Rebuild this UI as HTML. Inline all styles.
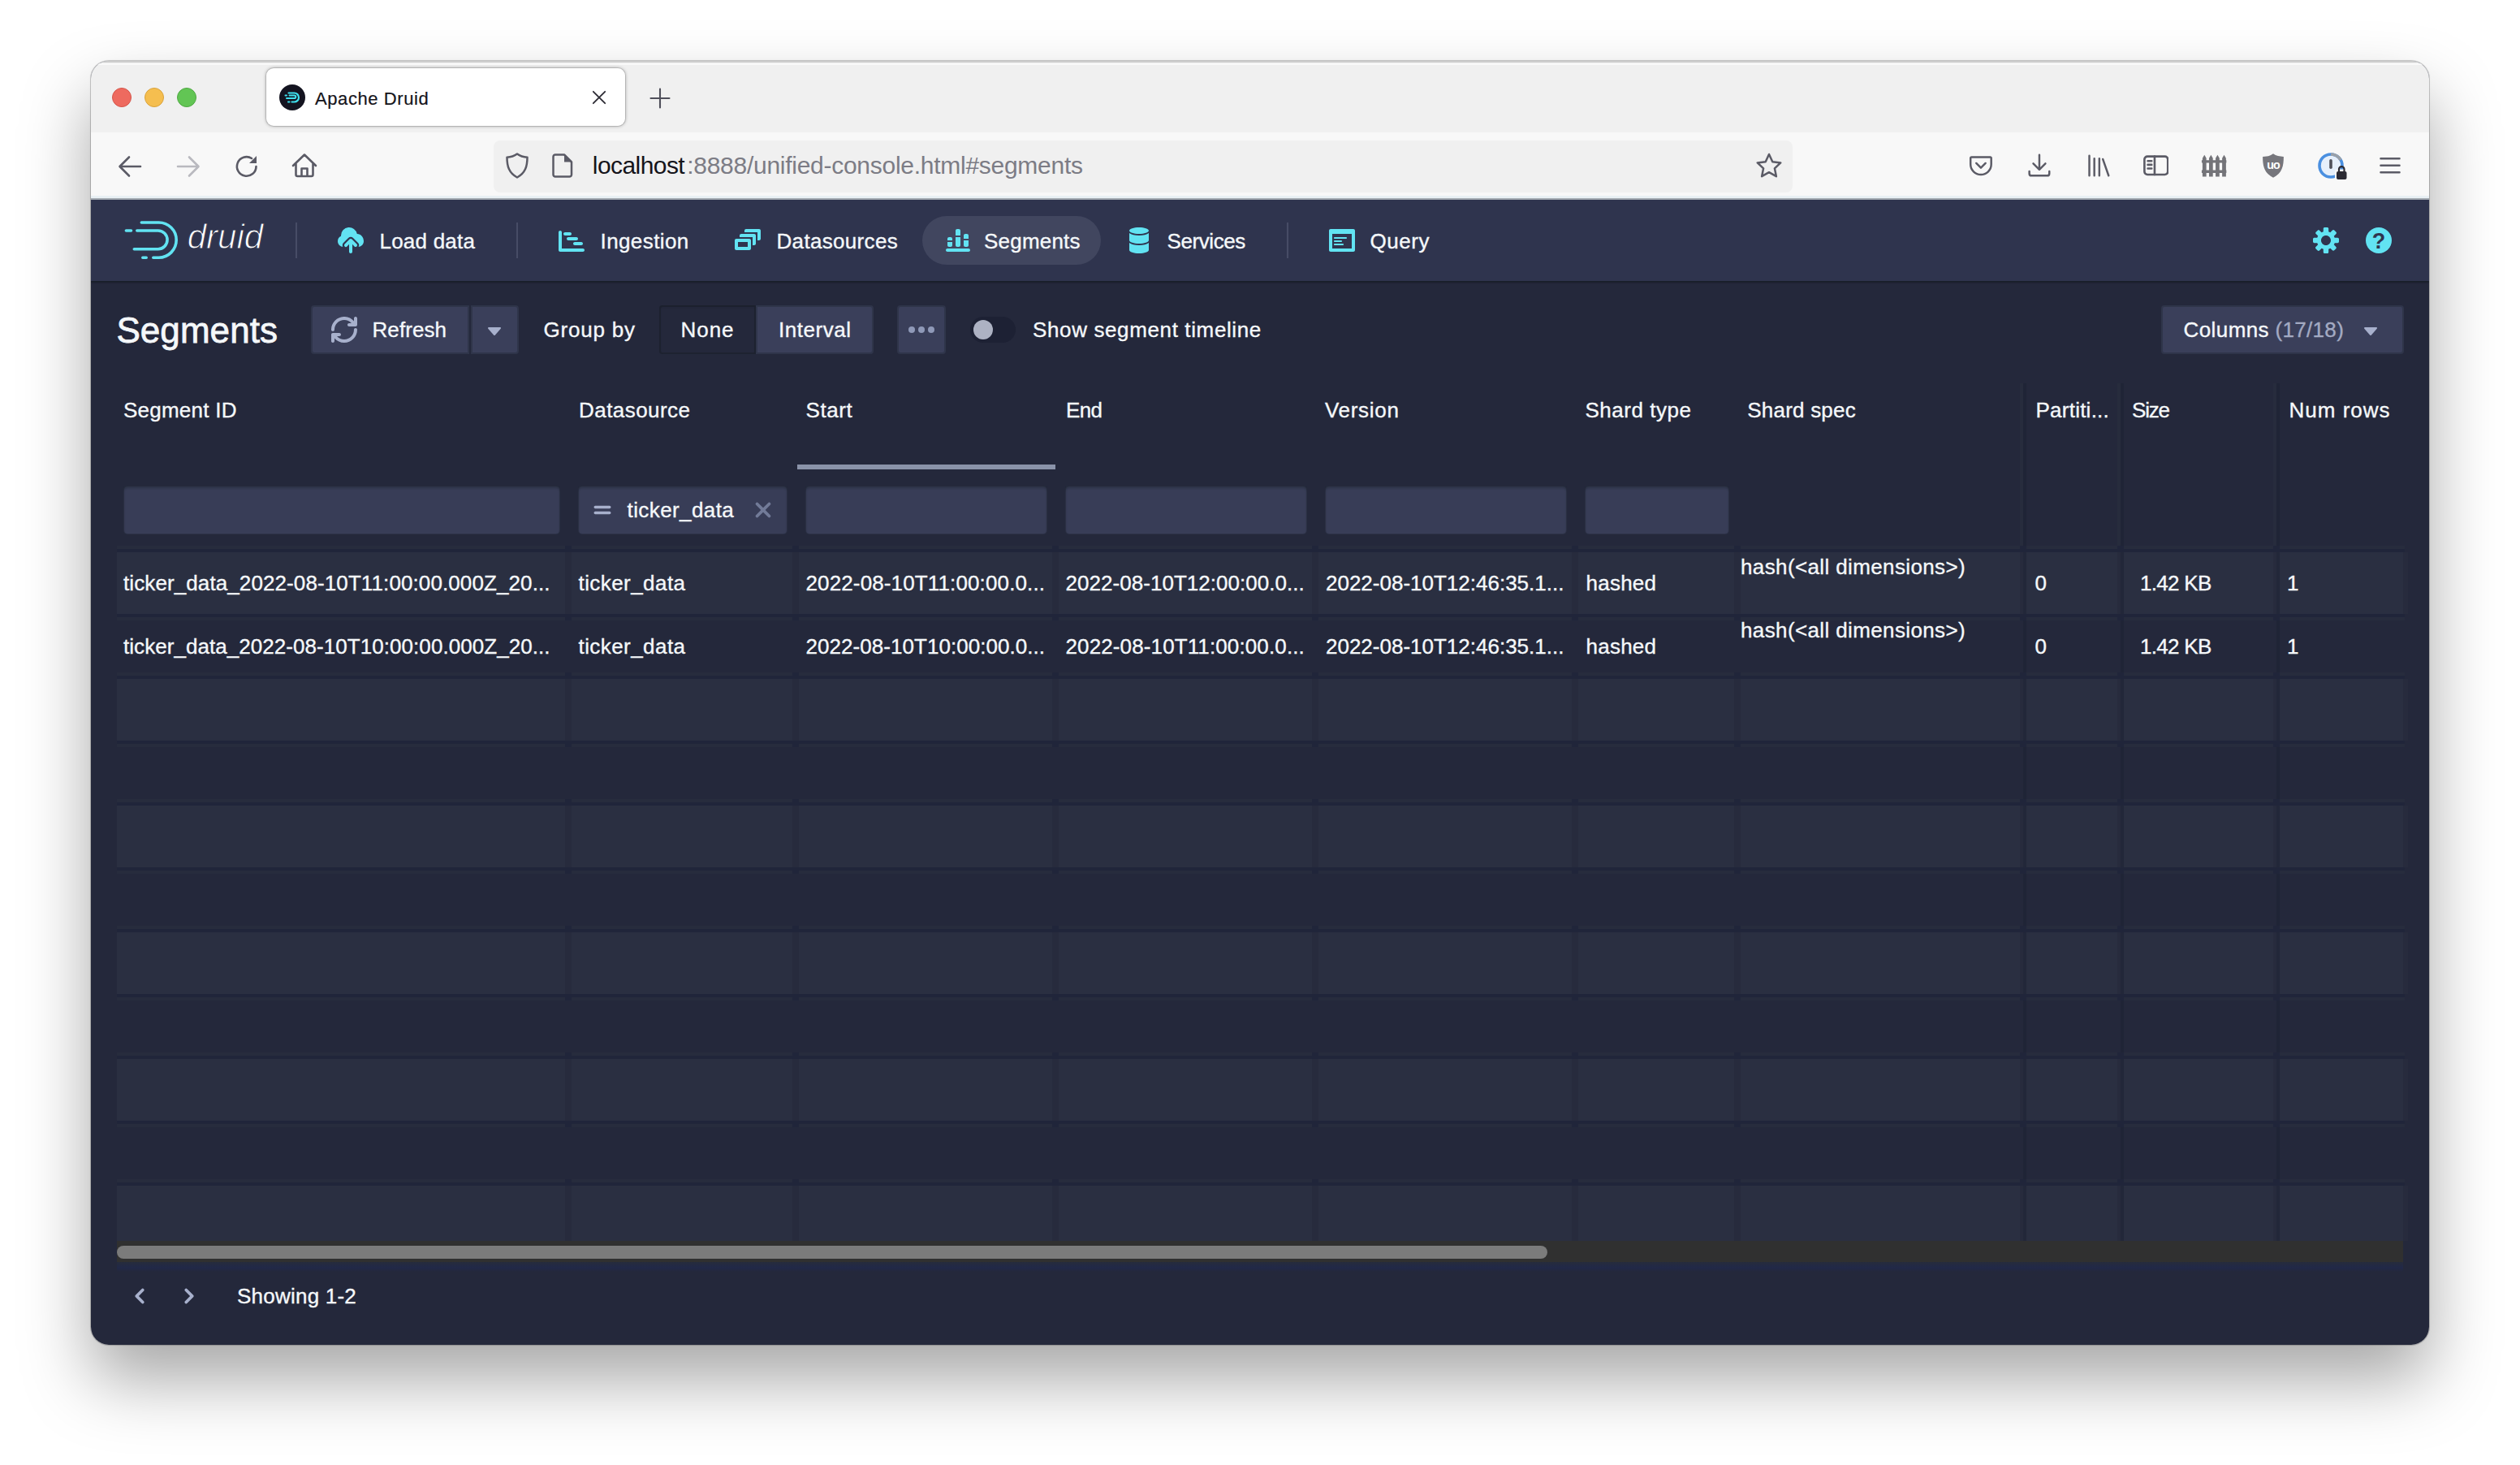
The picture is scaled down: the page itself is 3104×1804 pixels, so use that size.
<!DOCTYPE html>
<html lang="en"><head><meta charset="utf-8"><title>Apache Druid</title>
<style>
html,body{margin:0;padding:0;}
body{width:3104px;height:1804px;background:#fff;overflow:hidden;position:relative;font-family:"Liberation Sans",sans-serif;}
.b{position:absolute;display:block;box-sizing:border-box;}
.t{position:absolute;white-space:pre;font-family:"Liberation Sans",sans-serif;-webkit-text-stroke:0.35px currentColor;}
#shadow{position:absolute;left:112px;top:75px;width:2880px;height:1581px;border-radius:22px;box-shadow:0 43px 84px rgba(0,0,0,0.35),0 0 3px rgba(0,0,0,0.10),0 0 0 1px rgba(0,0,0,0.17);}
#win{position:absolute;left:112px;top:75px;width:2880px;height:1581px;border-radius:22px;overflow:hidden;background:#24283b;}
#in{position:absolute;left:-112px;top:-75px;width:3104px;height:1804px;}
</style></head><body>
<div id="shadow"></div>
<div id="win"><div id="in">
<div class="b" style="left:112px;top:75px;width:2880px;height:91px;background:#f0f0f0;"></div>
<div class="b" style="left:112px;top:75px;width:2880px;height:1.5px;background:#cdcdcd;"></div>
<div class="b" style="left:112px;top:78px;width:2880px;height:2px;background:#f9f9f9;"></div>
<div class="b" style="left:112px;top:163px;width:2880px;height:83px;background:#f8f8f8;"></div>
<div class="b" style="left:112px;top:241px;width:2880px;height:3px;background:#e9f0f4;"></div>
<div class="b" style="left:112px;top:244px;width:2880px;height:2px;background:#c9d0d8;"></div>
<div class="b" style="left:138px;top:107.5px;width:24px;height:24px;background:#ee6a5f;border-radius:50%;border:1px solid #d5564b;"></div>
<div class="b" style="left:178px;top:107.5px;width:24px;height:24px;background:#f5be4f;border-radius:50%;border:1px solid #d9a23b;"></div>
<div class="b" style="left:218px;top:107.5px;width:24px;height:24px;background:#62c554;border-radius:50%;border:1px solid #4fa843;"></div>
<div class="b" style="left:328px;top:84px;width:442px;height:70.5px;background:#ffffff;border-radius:9px;box-shadow:0 0 0 1px rgba(0,0,0,.10),0 0 4px rgba(0,0,0,.38);"></div>
<svg class="b" style="left:344px;top:104px;" width="32" height="32" viewBox="0 0 32 32"><circle cx="16" cy="16" r="16" fill="#141420"/><path d="M11.5 10.5h7a5.5 5.5 0 0 1 0 11h-3" fill="none" stroke="#3fe0ee" stroke-width="2.2" stroke-linecap="round"/><path d="M9 17h9.5a1.8 1.8 0 0 0 0-3.6h-6" fill="none" stroke="#3fe0ee" stroke-width="2" stroke-linecap="round"/><path d="M7.5 13.4h1.5M11 21.5h1.5" stroke="#3fe0ee" stroke-width="2" stroke-linecap="round"/></svg>
<div class="t" style="left:388.00px;top:111.08px;font-size:22px;line-height:22px;color:#15141a;letter-spacing:0.582px;-webkit-text-stroke:0.2px #15141a;">Apache Druid</div>
<svg class="b" style="left:728px;top:110px;" width="20" height="20" viewBox="0 0 20 20"><path d="M2.800 2.800l14.400 14.400M17.200 2.800l-14.400 14.400" stroke="#2b2a33" stroke-width="1.800" stroke-linecap="round"/></svg>
<svg class="b" style="left:800px;top:108px;" width="26" height="26" viewBox="0 0 26 26"><path d="M13 1.500v23M1.500 13h23" stroke="#4f4f5a" stroke-width="2.100" stroke-linecap="round"/></svg>
<svg class="b" style="left:144px;top:189px;" width="32" height="32" viewBox="0 0 32 32"><path d="M29 16H4M15 4.5L3.5 16 15 27.5" fill="none" stroke="#5b5b66" stroke-width="2.6" stroke-linecap="round" stroke-linejoin="round"/></svg>
<svg class="b" style="left:216px;top:189px;" width="32" height="32" viewBox="0 0 32 32"><path d="M3 16h25M17 4.5L28.5 16 17 27.5" fill="none" stroke="#b9b9bf" stroke-width="2.6" stroke-linecap="round" stroke-linejoin="round"/></svg>
<svg class="b" style="left:288px;top:189px;" width="32" height="32" viewBox="0 0 32 32"><path d="M27.5 16A11.8 11.8 0 1 1 22 6" fill="none" stroke="#5b5b66" stroke-width="2.6" stroke-linecap="round"/><path d="M28 3v9h-9z" fill="#5b5b66"/></svg>
<svg class="b" style="left:358px;top:187px;" width="34" height="34" viewBox="0 0 34 34"><path d="M3 17L17 3.5 31 17M6.5 14.5V28a2 2 0 0 0 2 2h17a2 2 0 0 0 2-2V14.5M13.5 30v-9.500h7V30" fill="none" stroke="#5b5b66" stroke-width="2.6" stroke-linecap="round" stroke-linejoin="round"/></svg>
<div class="b" style="left:608px;top:173px;width:1600px;height:64px;background:#f0f0f0;border-radius:8px;"></div>
<svg class="b" style="left:621px;top:187px;" width="32" height="34" viewBox="0 0 32 34"><path d="M16 2.5C12 5.5 8 6.5 3.500 6.700 3.500 18 6 26 16 31.500 26 26 28.500 18 28.500 6.700 24 6.500 20 5.500 16 2.500z" fill="none" stroke="#5b5b66" stroke-width="2.5" stroke-linejoin="round"/></svg>
<svg class="b" style="left:680px;top:189px;" width="26" height="30" viewBox="0 0 26 30"><path d="M4 1.500h11l9 9V26a2.500 2.500 0 0 1-2.500 2.500H4A2.500 2.500 0 0 1 1.500 26V4A2.500 2.500 0 0 1 4 1.500z" fill="none" stroke="#5b5b66" stroke-width="2.500" stroke-linejoin="round"/><path d="M15 1.500v9h9z" fill="#5b5b66"/></svg>
<div class="t" style="left:729.80px;top:189.10px;font-size:30px;line-height:30px;color:#15141a;letter-spacing:-0.564px;-webkit-text-stroke:0;">localhost</div>
<div class="t" style="left:846.20px;top:189.10px;font-size:30px;line-height:30px;color:#7c7c85;letter-spacing:-0.270px;-webkit-text-stroke:0;">:8888/unified-console.html#segments</div>
<svg class="b" style="left:2162px;top:187px;" width="34" height="34" viewBox="0 0 34 34"><path d="M17 3l4.300 9.200 10 1.200-7.400 6.900 2 9.900L17 25.200 8.100 30.200l2-9.900L2.700 13.400l10-1.200z" fill="none" stroke="#5b5b66" stroke-width="2.500" stroke-linejoin="round"/></svg>
<svg class="b" style="left:2425.04px;top:189.54px;" width="29.92" height="29.92" viewBox="0 0 34 34"><path d="M4 4h26a1.500 1.500 0 0 1 1.500 1.500V14a14.500 14.500 0 0 1-29 0V5.500A1.500 1.500 0 0 1 4 4z" fill="none" stroke="#5b5b66" stroke-width="2.800" stroke-linecap="round" stroke-linejoin="round"/><path d="M10.500 12.500l6.500 6.500 6.500-6.500" fill="none" stroke="#5b5b66" stroke-width="2.800" stroke-linecap="round" stroke-linejoin="round"/></svg>
<svg class="b" style="left:2496.54px;top:188.54px;" width="29.92" height="29.92" viewBox="0 0 34 34"><path d="M17 2v20M8.500 14l8.500 8.500 8.500-8.500M3 25v3a3 3 0 0 0 3 3h22a3 3 0 0 0 3-3v-3" fill="none" stroke="#5b5b66" stroke-width="2.800" stroke-linecap="round" stroke-linejoin="round"/></svg>
<svg class="b" style="left:2570.04px;top:189.04px;" width="29.92" height="29.92" viewBox="0 0 34 34"><path d="M4 3v28M11 7v24M18 7v24M23 8l8 23" fill="none" stroke="#5b5b66" stroke-width="2.800" stroke-linecap="round" stroke-linejoin="round"/></svg>
<svg class="b" style="left:2639.89px;top:188.19px;" width="31.62" height="31.62" viewBox="0 0 34 34"><rect x="1.500" y="5" width="31" height="24" rx="4" fill="none" stroke="#5b5b66" stroke-width="2.800" stroke-linecap="round" stroke-linejoin="round"/><path d="M15 5v24M6 11h5M6 16h5M6 21h5" fill="none" stroke="#5b5b66" stroke-width="2.800" stroke-linecap="round" stroke-linejoin="round"/></svg>
<svg class="b" style="left:2711.35px;top:187.85px;" width="32.3" height="32.3" viewBox="0 0 34 34"><path d="M2 7l2.500-4 2.500 4v24h-5zM10.500 7l2.500-4 2.500 4v24h-5zM19 7l2.500-4 2.500 4v24h-5zM27.500 7l2.500-4 2.500 4v24h-5z" fill="#747479"/><path d="M1 11.500h32M1 24.500h32" fill="none" stroke="#747479" stroke-width="3.500"/></svg>
<svg class="b" style="left:2784px;top:188px" width="32" height="32" viewBox="0 0 36 36"><path d="M18 1.500C14 4.500 9 5.500 3.500 5.500c0 13 2 22.500 14.500 29 12.500-6.500 14.500-16 14.500-29-5.500 0-10.500-1-14.500-4z" fill="#76767c"/><text x="18" y="23" font-family="Liberation Sans, sans-serif" font-size="16" font-weight="700" fill="#fff" text-anchor="middle" letter-spacing="-1">uo</text></svg>
<svg class="b" style="left:2854px;top:186px;" width="40" height="38" viewBox="0 0 40 38"><circle cx="17" cy="18" r="14" fill="#e6effb" stroke="#4a8fe0" stroke-width="3.600"/><path d="M17 4a14 14 0 0 1 12 7" stroke="#9aa0a8" stroke-width="3.600" fill="none"/><rect x="15.200" y="10" width="3.600" height="12" rx="1.800" fill="#50505a"/><rect x="22" y="22.500" width="16" height="13.500" rx="2.200" fill="#f8f8f8"/><rect x="24" y="25" width="12.500" height="10" rx="2" fill="#2b2a33"/><path d="M27 25v-2.600a3.250 3.250 0 0 1 6.500 0V25" fill="none" stroke="#2b2a33" stroke-width="2.200"/></svg>
<svg class="b" style="left:2931px;top:192px;" width="26" height="24" viewBox="0 0 26 24"><path d="M1.500 3.300h23M1.500 11.800h23M1.500 20.300h23" fill="none" stroke="#5b5b66" stroke-width="2.600" stroke-linecap="round"/></svg>
<div class="b" style="left:112px;top:246px;width:2880px;height:100px;background:#2f344e;box-shadow:0 0 0 2px rgba(16,22,26,.2),0 0 0 rgba(16,22,26,0),0 2px 2px rgba(16,22,26,.4);"></div>
<svg class="b" style="left:150px;top:268px;" width="70" height="54" viewBox="0 0 70 54"><path d="M24.3 6H45.6A21.6 21.6 0 0 1 45.6 49.200H38.800" fill="none" stroke="#62e3f2" stroke-width="3.600" stroke-linecap="round"/><path d="M18.800 16H44.700A11.350 11.350 0 0 1 44.700 38.700H15.300" fill="none" stroke="#62e3f2" stroke-width="3.600" stroke-linecap="round"/><path d="M5.400 16H11.500M25.800 49.200H30.200" fill="none" stroke="#62e3f2" stroke-width="3.600" stroke-linecap="round"/></svg>
<div class="t" style="left:230.80px;top:270.85px;font-size:42px;line-height:42px;color:#ffffff;letter-spacing:-0.036px;font-style:italic;-webkit-text-stroke:1.0px #2f344e;">druid</div>
<div class="b" style="left:364px;top:274px;width:2px;height:44px;background:#474c66;"></div>
<div class="b" style="left:635.5px;top:274px;width:2px;height:44px;background:#474c66;"></div>
<div class="b" style="left:1585px;top:274px;width:2px;height:44px;background:#474c66;"></div>
<div class="b" style="left:1136px;top:266px;width:220px;height:60px;background:#41465f;border-radius:30px;"></div>
<svg class="b" style="left:416px;top:280px;" width="32" height="32" viewBox="0 0 16 16"><path d="M12 4c-.030 0-.070 0-.100.010A5 5 0 002 5c0 .110.010.220.020.330A3.495 3.495 0 000 8.500C0 10.430 1.570 12 3.500 12h9c1.930 0 3.500-1.570 3.500-3.500C16 6.010 14.210 4 12 4z" fill="#62e3f2"/><path d="M8.710 7.290C8.530 7.110 8.280 7 8 7s-.530.110-.710.290l-3 3a1.003 1.003 0 001.420 1.420L7 10.410V15c0 .550.450 1 1 1s1-.450 1-1v-4.590l1.290 1.290c.180.190.430.300.710.300a1.003 1.003 0 00.710-1.710l-3-3z" fill="#2f344e" stroke="#2f344e" stroke-width="2.200"/><path d="M8.710 7.290C8.530 7.110 8.280 7 8 7s-.530.110-.710.290l-3 3a1.003 1.003 0 001.420 1.420L7 10.410V15c0 .550.450 1 1 1s1-.450 1-1v-4.590l1.290 1.290c.180.190.430.300.710.300a1.003 1.003 0 00.710-1.710l-3-3z" fill="#62e3f2"/></svg>
<div class="t" style="left:467.50px;top:284.19px;font-size:26px;line-height:26px;color:#f5f8fa;letter-spacing:0.225px;">Load data</div>
<svg class="b" style="left:688px;top:280px;" width="32" height="32" viewBox="0 0 16 16"><path d="M4 5h3c.550 0 1-.450 1-1s-.450-1-1-1H4c-.550 0-1 .450-1 1s.450 1 1 1zm2 3h5c.550 0 1-.450 1-1s-.450-1-1-1H6c-.550 0-1 .450-1 1s.450 1 1 1zm9 5H2V3c0-.550-.450-1-1-1s-1 .450-1 1v11c0 .550.450 1 1 1h14c.550 0 1-.450 1-1s-.450-1-1-1zm-5-4c-.550 0-1 .450-1 1s.450 1 1 1h4c.550 0 1-.450 1-1s-.450-1-1-1h-4z" fill="#62e3f2" fill-rule="evenodd"/></svg>
<div class="t" style="left:739.50px;top:284.19px;font-size:26px;line-height:26px;color:#f5f8fa;letter-spacing:0.408px;">Ingestion</div>
<svg class="b" style="left:905px;top:280px;" width="32" height="32" viewBox="0 0 16 16"><path d="M12 3.980H4c-.550 0-1 .450-1 1v1h8v5h1c.550 0 1-.450 1-1v-5c0-.550-.450-1-1-1zm3-3H7c-.550 0-1 .450-1 1v1h8v5h1c.550 0 1-.450 1-1v-5c0-.550-.450-1-1-1zm-6 6H1c-.550 0-1 .450-1 1v5c0 .550.450 1 1 1h8c.550 0 1-.450 1-1v-5c0-.550-.450-1-1-1zm-1 5H2v-3h6v3z" fill="#62e3f2" fill-rule="evenodd"/></svg>
<div class="t" style="left:956.50px;top:284.19px;font-size:26px;line-height:26px;color:#f5f8fa;letter-spacing:0.324px;">Datasources</div>
<svg class="b" style="left:1163px;top:280px;" width="32" height="32" viewBox="0 0 16 16"><path d="M10 2c0-.550-.450-1-1-1H8c-.550 0-1 .450-1 1v3h3V2zm3 10h1c.550 0 1-.450 1-1V8h-3v3c0 .550.450 1 1 1zm2-7c0-.550-.450-1-1-1h-1c-.550 0-1 .450-1 1v2h3V5zm-5 1H7v5c0 .550.450 1 1 1h1c.550 0 1-.450 1-1V6zm5 7H2c-.550 0-1 .450-1 1s.450 1 1 1h13c.550 0 1-.450 1-1s-.450-1-1-1zM3 12h1c.550 0 1-.450 1-1V9H2v2c0 .550.450 1 1 1zm2-5c0-.550-.450-1-1-1H3c-.550 0-1 .450-1 1v1h3V7z" fill="#62e3f2" fill-rule="evenodd"/></svg>
<div class="t" style="left:1212.00px;top:284.19px;font-size:26px;line-height:26px;color:#f5f8fa;letter-spacing:0.207px;">Segments</div>
<svg class="b" style="left:1387px;top:280px;" width="32" height="32" viewBox="0 0 16 16"><path d="M8 4c3.310 0 6-.900 6-2s-2.690-2-6-2C4.680 0 2 .900 2 2s2.680 2 6 2zm-6-.480V8c0 1.100 2.690 2 6 2s6-.900 6-2V3.520C12.780 4.400 10.560 5 8 5s-4.780-.600-6-1.480zm0 6V14c0 1.100 2.690 2 6 2s6-.900 6-2V9.520C12.780 10.400 10.560 11 8 11s-4.780-.600-6-1.480z" fill="#62e3f2" fill-rule="evenodd"/></svg>
<div class="t" style="left:1437.50px;top:284.19px;font-size:26px;line-height:26px;color:#f5f8fa;letter-spacing:-0.416px;">Services</div>
<svg class="b" style="left:1636.7px;top:280px;" width="32" height="32" viewBox="0 0 16 16"><path d="M3.500 7h7c.280 0 .500-.220.500-.500s-.220-.500-.500-.500h-7c-.280 0-.500.220-.500.500s.220.500.500.500zM15 1H1c-.550 0-1 .450-1 1v12c0 .550.450 1 1 1h14c.550 0 1-.450 1-1V2c0-.550-.450-1-1-1zm-1 12H2V4h12v9zM3.500 9h4c.280 0 .500-.220.500-.500S7.780 8 7.500 8h-4c-.280 0-.500.220-.500.500s.220.500.500.500zm0 2h5c.280 0 .500-.220.500-.500s-.220-.500-.500-.500h-5c-.280 0-.500.220-.500.500s.220.500.500.500z" fill="#62e3f2" fill-rule="evenodd"/></svg>
<div class="t" style="left:1687.50px;top:284.19px;font-size:26px;line-height:26px;color:#f5f8fa;letter-spacing:0.575px;">Query</div>
<svg class="b" style="left:2849.4px;top:280px;" width="32" height="32" viewBox="0 0 16 16"><path d="M15.190 6.390h-1.850c-.110-.370-.270-.710-.450-1.040l1.360-1.360c.310-.310.310-.820 0-1.130l-1.130-1.130a.803.803 0 00-1.130 0l-1.360 1.360c-.330-.170-.670-.330-1.040-.440V.790c0-.440-.360-.800-.800-.800h-1.600c-.440 0-.800.360-.800.800v1.860c-.390.120-.750.280-1.100.470l-1.300-1.300c-.300-.300-.790-.300-1.090 0L1.820 2.910c-.300.300-.300.790 0 1.090l1.300 1.300c-.200.340-.360.700-.480 1.090H.790c-.440 0-.800.360-.800.800v1.600c0 .440.360.800.800.800h1.850c.110.370.270.710.450 1.040l-1.360 1.360c-.310.310-.310.820 0 1.130l1.130 1.130c.310.310.820.310 1.130 0l1.360-1.360c.330.180.670.330 1.040.440v1.860c0 .440.360.800.800.800h1.600c.440 0 .800-.360.800-.800v-1.860c.390-.120.750-.280 1.100-.470l1.300 1.300c.300.300.790.300 1.090 0l1.090-1.090c.300-.300.300-.790 0-1.090l-1.300-1.300c.190-.350.360-.710.480-1.100h1.850c.440 0 .800-.360.800-.800v-1.600a.816.816 0 00-.810-.790zm-7.200 4.600c-1.660 0-3-1.340-3-3s1.340-3 3-3 3 1.340 3 3-1.340 3-3 3z" fill="#62e3f2" fill-rule="evenodd"/></svg>
<svg class="b" style="left:2914px;top:280px" width="32" height="32" viewBox="0 0 32 32"><circle cx="16" cy="16" r="16" fill="#62e3f2"/><text x="16" y="25.600" font-family="Liberation Sans, sans-serif" font-size="27" font-weight="700" fill="#2f344e" text-anchor="middle">?</text></svg>
<div class="t" style="left:143.40px;top:385.35px;font-size:44px;line-height:44px;color:#f5f8fa;letter-spacing:0.073px;-webkit-text-stroke:0.8px currentColor;">Segments</div>
<div class="b" style="left:383px;top:376px;width:195px;height:60px;background:#3a3f5a;border-radius:4px 0 0 4px;box-shadow:inset 0 0 0 2px rgba(16,22,26,.25);"></div>
<div class="b" style="left:580px;top:376px;width:59px;height:60px;background:#3a3f5a;border-radius:0 4px 4px 0;box-shadow:inset 0 0 0 2px rgba(16,22,26,.25);"></div>
<svg class="b" style="left:408px;top:390px;" width="32" height="32" viewBox="0 0 16 16"><path d="M14.990 6.990c-.550 0-1 .450-1 1 0 3.310-2.690 6-6 6-1.770 0-3.360-.780-4.460-2h1.460c.550 0 1-.450 1-1s-.450-1-1-1h-4c-.550 0-1 .450-1 1v4c0 .550.450 1 1 1s1-.450 1-1v-1.740a7.950 7.950 0 006 2.740c4.420 0 8-3.580 8-8 0-.550-.450-1-1-1zm0-7c-.550 0-1 .450-1 1v1.740a7.950 7.950 0 00-6-2.740c-4.420 0-8 3.580-8 8 0 .550.450 1 1 1s1-.450 1-1c0-3.310 2.690-6 6-6 1.770 0 3.360.780 4.460 2h-1.460c-.550 0-1 .450-1 1s.450 1 1 1h4c.550 0 1-.450 1-1v-4c0-.550-.450-1-1-1z" fill="#a7b0cc" fill-rule="evenodd"/></svg>
<div class="t" style="left:458.50px;top:393.49px;font-size:26px;line-height:26px;color:#f5f8fa;letter-spacing:0.079px;">Refresh</div>
<svg class="b" style="left:593px;top:390.5px;" width="32" height="32" viewBox="0 0 16 16"><path d="M12 6.500c0-.280-.220-.500-.500-.500h-7a.495.495 0 00-.370.830l3.500 4c.090.100.220.170.370.170s.280-.070.370-.170l3.500-4c.080-.090.130-.200.130-.330z" fill="#a7b0cc" fill-rule="evenodd"/></svg>
<div class="t" style="left:669.50px;top:393.49px;font-size:26px;line-height:26px;color:#f5f8fa;letter-spacing:0.795px;">Group by</div>
<div class="b" style="left:812px;top:376px;width:119px;height:60px;background:#24283b;border-radius:4px 0 0 4px;box-shadow:inset 0 0 0 2px rgba(16,22,26,.3),inset 0 2px 3px rgba(16,22,26,.15);"></div>
<div class="b" style="left:931px;top:376px;width:145px;height:60px;background:#3a3f5a;border-radius:0 4px 4px 0;box-shadow:inset 0 0 0 2px rgba(16,22,26,.25);"></div>
<div class="t" style="left:838.50px;top:393.49px;font-size:26px;line-height:26px;color:#f5f8fa;letter-spacing:0.945px;">None</div>
<div class="t" style="left:959.00px;top:393.49px;font-size:26px;line-height:26px;color:#f5f8fa;letter-spacing:0.535px;">Interval</div>
<div class="b" style="left:1105px;top:376px;width:60px;height:60px;background:#3a3f5a;border-radius:4px;box-shadow:inset 0 0 0 2px rgba(16,22,26,.25);"></div>
<svg class="b" style="left:1119px;top:398px;" width="32" height="16" viewBox="0 0 32 16"><circle cx="4" cy="8" r="4" fill="#8f99b8"/><circle cx="16" cy="8" r="4" fill="#8f99b8"/><circle cx="28" cy="8" r="4" fill="#8f99b8"/></svg>
<div class="b" style="left:1194.7px;top:390px;width:56px;height:32px;background:#1d2134;border-radius:16px;"></div>
<div class="b" style="left:1198.7px;top:394.2px;width:24px;height:24px;background:#adb2c3;border-radius:50%;"></div>
<div class="t" style="left:1272.00px;top:393.49px;font-size:26px;line-height:26px;color:#f5f8fa;letter-spacing:0.626px;">Show segment timeline</div>
<div class="b" style="left:2662px;top:376px;width:299px;height:60px;background:#3a3f5a;border-radius:4px;box-shadow:inset 0 0 0 2px rgba(16,22,26,.25);"></div>
<div class="t" style="left:2689.50px;top:393.49px;font-size:26px;line-height:26px;color:#f5f8fa;letter-spacing:0.417px;">Columns</div>
<div class="t" style="left:2802.50px;top:393.49px;font-size:26px;line-height:26px;color:#a3aac2;letter-spacing:0.322px;">(17/18)</div>
<svg class="b" style="left:2904px;top:391px;" width="32" height="32" viewBox="0 0 16 16"><path d="M12 6.500c0-.280-.220-.500-.500-.500h-7a.495.495 0 00-.370.830l3.500 4c.090.100.220.170.370.170s.280-.070.370-.170l3.500-4c.080-.090.130-.200.130-.330z" fill="#a7b0cc" fill-rule="evenodd"/></svg>
<div class="b" style="left:2488px;top:472px;width:4px;height:204px;background:#272c3d;"></div>
<div class="b" style="left:2492px;top:472px;width:4px;height:204px;background:#1f2436;"></div>
<div class="b" style="left:2608px;top:472px;width:4px;height:204px;background:#272c3d;"></div>
<div class="b" style="left:2612px;top:472px;width:4px;height:204px;background:#1f2436;"></div>
<div class="b" style="left:2800px;top:472px;width:4px;height:204px;background:#272c3d;"></div>
<div class="b" style="left:2804px;top:472px;width:4px;height:204px;background:#1f2436;"></div>
<div class="b" style="left:144px;top:672px;width:2818px;height:4px;background:#272c3d;"></div>
<div class="b" style="left:144px;top:676px;width:2818px;height:4px;background:#20253a;"></div>
<div class="b" style="left:144px;top:680px;width:2822px;height:76px;background:#272b3d;"></div>
<div class="b" style="left:144px;top:680px;width:552px;height:76px;background:#2a2f41;"></div>
<div class="b" style="left:704px;top:680px;width:272px;height:76px;background:#2a2f41;"></div>
<div class="b" style="left:984px;top:680px;width:312px;height:76px;background:#2a2f41;"></div>
<div class="b" style="left:1304px;top:680px;width:312px;height:76px;background:#2a2f41;"></div>
<div class="b" style="left:1624px;top:680px;width:312px;height:76px;background:#2a2f41;"></div>
<div class="b" style="left:1944px;top:680px;width:192px;height:76px;background:#2a2f41;"></div>
<div class="b" style="left:2144px;top:680px;width:344px;height:76px;background:#2a2f41;"></div>
<div class="b" style="left:2496px;top:680px;width:112px;height:76px;background:#2a2f41;"></div>
<div class="b" style="left:2616px;top:680px;width:184px;height:76px;background:#2a2f41;"></div>
<div class="b" style="left:2808px;top:680px;width:152px;height:76px;background:#2a2f41;"></div>
<div class="b" style="left:2492px;top:680px;width:4px;height:76px;background:#222739;"></div>
<div class="b" style="left:2612px;top:680px;width:4px;height:76px;background:#222739;"></div>
<div class="b" style="left:2804px;top:680px;width:4px;height:76px;background:#222739;"></div>
<div class="b" style="left:144px;top:756px;width:2818px;height:4px;background:#20253a;"></div>
<div class="b" style="left:144px;top:760px;width:2818px;height:4px;background:#272c3d;"></div>
<div class="b" style="left:696px;top:756px;width:8px;height:8px;background:#20253a;"></div>
<div class="b" style="left:976px;top:756px;width:8px;height:8px;background:#20253a;"></div>
<div class="b" style="left:1296px;top:756px;width:8px;height:8px;background:#20253a;"></div>
<div class="b" style="left:1616px;top:756px;width:8px;height:8px;background:#20253a;"></div>
<div class="b" style="left:1936px;top:756px;width:8px;height:8px;background:#20253a;"></div>
<div class="b" style="left:2136px;top:756px;width:8px;height:8px;background:#20253a;"></div>
<div class="b" style="left:2488px;top:756px;width:8px;height:8px;background:#20253a;"></div>
<div class="b" style="left:2608px;top:756px;width:8px;height:8px;background:#20253a;"></div>
<div class="b" style="left:2800px;top:756px;width:8px;height:8px;background:#20253a;"></div>
<div class="b" style="left:2492px;top:764px;width:4px;height:64px;background:#1f2436;"></div>
<div class="b" style="left:2612px;top:764px;width:4px;height:64px;background:#1f2436;"></div>
<div class="b" style="left:2804px;top:764px;width:4px;height:64px;background:#1f2436;"></div>
<div class="b" style="left:144px;top:828px;width:2818px;height:4px;background:#272c3d;"></div>
<div class="b" style="left:144px;top:832px;width:2818px;height:4px;background:#20253a;"></div>
<div class="b" style="left:696px;top:828px;width:8px;height:8px;background:#20253a;"></div>
<div class="b" style="left:976px;top:828px;width:8px;height:8px;background:#20253a;"></div>
<div class="b" style="left:1296px;top:828px;width:8px;height:8px;background:#20253a;"></div>
<div class="b" style="left:1616px;top:828px;width:8px;height:8px;background:#20253a;"></div>
<div class="b" style="left:1936px;top:828px;width:8px;height:8px;background:#20253a;"></div>
<div class="b" style="left:2136px;top:828px;width:8px;height:8px;background:#20253a;"></div>
<div class="b" style="left:2488px;top:828px;width:8px;height:8px;background:#20253a;"></div>
<div class="b" style="left:2608px;top:828px;width:8px;height:8px;background:#20253a;"></div>
<div class="b" style="left:2800px;top:828px;width:8px;height:8px;background:#20253a;"></div>
<div class="b" style="left:144px;top:836px;width:2822px;height:76px;background:#272b3d;"></div>
<div class="b" style="left:144px;top:836px;width:552px;height:76px;background:#2a2f41;"></div>
<div class="b" style="left:704px;top:836px;width:272px;height:76px;background:#2a2f41;"></div>
<div class="b" style="left:984px;top:836px;width:312px;height:76px;background:#2a2f41;"></div>
<div class="b" style="left:1304px;top:836px;width:312px;height:76px;background:#2a2f41;"></div>
<div class="b" style="left:1624px;top:836px;width:312px;height:76px;background:#2a2f41;"></div>
<div class="b" style="left:1944px;top:836px;width:192px;height:76px;background:#2a2f41;"></div>
<div class="b" style="left:2144px;top:836px;width:344px;height:76px;background:#2a2f41;"></div>
<div class="b" style="left:2496px;top:836px;width:112px;height:76px;background:#2a2f41;"></div>
<div class="b" style="left:2616px;top:836px;width:184px;height:76px;background:#2a2f41;"></div>
<div class="b" style="left:2808px;top:836px;width:152px;height:76px;background:#2a2f41;"></div>
<div class="b" style="left:2492px;top:836px;width:4px;height:76px;background:#222739;"></div>
<div class="b" style="left:2612px;top:836px;width:4px;height:76px;background:#222739;"></div>
<div class="b" style="left:2804px;top:836px;width:4px;height:76px;background:#222739;"></div>
<div class="b" style="left:144px;top:912px;width:2818px;height:4px;background:#20253a;"></div>
<div class="b" style="left:144px;top:916px;width:2818px;height:4px;background:#272c3d;"></div>
<div class="b" style="left:696px;top:912px;width:8px;height:8px;background:#20253a;"></div>
<div class="b" style="left:976px;top:912px;width:8px;height:8px;background:#20253a;"></div>
<div class="b" style="left:1296px;top:912px;width:8px;height:8px;background:#20253a;"></div>
<div class="b" style="left:1616px;top:912px;width:8px;height:8px;background:#20253a;"></div>
<div class="b" style="left:1936px;top:912px;width:8px;height:8px;background:#20253a;"></div>
<div class="b" style="left:2136px;top:912px;width:8px;height:8px;background:#20253a;"></div>
<div class="b" style="left:2488px;top:912px;width:8px;height:8px;background:#20253a;"></div>
<div class="b" style="left:2608px;top:912px;width:8px;height:8px;background:#20253a;"></div>
<div class="b" style="left:2800px;top:912px;width:8px;height:8px;background:#20253a;"></div>
<div class="b" style="left:2492px;top:920px;width:4px;height:64px;background:#1f2436;"></div>
<div class="b" style="left:2612px;top:920px;width:4px;height:64px;background:#1f2436;"></div>
<div class="b" style="left:2804px;top:920px;width:4px;height:64px;background:#1f2436;"></div>
<div class="b" style="left:144px;top:984px;width:2818px;height:4px;background:#272c3d;"></div>
<div class="b" style="left:144px;top:988px;width:2818px;height:4px;background:#20253a;"></div>
<div class="b" style="left:696px;top:984px;width:8px;height:8px;background:#20253a;"></div>
<div class="b" style="left:976px;top:984px;width:8px;height:8px;background:#20253a;"></div>
<div class="b" style="left:1296px;top:984px;width:8px;height:8px;background:#20253a;"></div>
<div class="b" style="left:1616px;top:984px;width:8px;height:8px;background:#20253a;"></div>
<div class="b" style="left:1936px;top:984px;width:8px;height:8px;background:#20253a;"></div>
<div class="b" style="left:2136px;top:984px;width:8px;height:8px;background:#20253a;"></div>
<div class="b" style="left:2488px;top:984px;width:8px;height:8px;background:#20253a;"></div>
<div class="b" style="left:2608px;top:984px;width:8px;height:8px;background:#20253a;"></div>
<div class="b" style="left:2800px;top:984px;width:8px;height:8px;background:#20253a;"></div>
<div class="b" style="left:144px;top:992px;width:2822px;height:76px;background:#272b3d;"></div>
<div class="b" style="left:144px;top:992px;width:552px;height:76px;background:#2a2f41;"></div>
<div class="b" style="left:704px;top:992px;width:272px;height:76px;background:#2a2f41;"></div>
<div class="b" style="left:984px;top:992px;width:312px;height:76px;background:#2a2f41;"></div>
<div class="b" style="left:1304px;top:992px;width:312px;height:76px;background:#2a2f41;"></div>
<div class="b" style="left:1624px;top:992px;width:312px;height:76px;background:#2a2f41;"></div>
<div class="b" style="left:1944px;top:992px;width:192px;height:76px;background:#2a2f41;"></div>
<div class="b" style="left:2144px;top:992px;width:344px;height:76px;background:#2a2f41;"></div>
<div class="b" style="left:2496px;top:992px;width:112px;height:76px;background:#2a2f41;"></div>
<div class="b" style="left:2616px;top:992px;width:184px;height:76px;background:#2a2f41;"></div>
<div class="b" style="left:2808px;top:992px;width:152px;height:76px;background:#2a2f41;"></div>
<div class="b" style="left:2492px;top:992px;width:4px;height:76px;background:#222739;"></div>
<div class="b" style="left:2612px;top:992px;width:4px;height:76px;background:#222739;"></div>
<div class="b" style="left:2804px;top:992px;width:4px;height:76px;background:#222739;"></div>
<div class="b" style="left:144px;top:1068px;width:2818px;height:4px;background:#20253a;"></div>
<div class="b" style="left:144px;top:1072px;width:2818px;height:4px;background:#272c3d;"></div>
<div class="b" style="left:696px;top:1068px;width:8px;height:8px;background:#20253a;"></div>
<div class="b" style="left:976px;top:1068px;width:8px;height:8px;background:#20253a;"></div>
<div class="b" style="left:1296px;top:1068px;width:8px;height:8px;background:#20253a;"></div>
<div class="b" style="left:1616px;top:1068px;width:8px;height:8px;background:#20253a;"></div>
<div class="b" style="left:1936px;top:1068px;width:8px;height:8px;background:#20253a;"></div>
<div class="b" style="left:2136px;top:1068px;width:8px;height:8px;background:#20253a;"></div>
<div class="b" style="left:2488px;top:1068px;width:8px;height:8px;background:#20253a;"></div>
<div class="b" style="left:2608px;top:1068px;width:8px;height:8px;background:#20253a;"></div>
<div class="b" style="left:2800px;top:1068px;width:8px;height:8px;background:#20253a;"></div>
<div class="b" style="left:2492px;top:1076px;width:4px;height:64px;background:#1f2436;"></div>
<div class="b" style="left:2612px;top:1076px;width:4px;height:64px;background:#1f2436;"></div>
<div class="b" style="left:2804px;top:1076px;width:4px;height:64px;background:#1f2436;"></div>
<div class="b" style="left:144px;top:1140px;width:2818px;height:4px;background:#272c3d;"></div>
<div class="b" style="left:144px;top:1144px;width:2818px;height:4px;background:#20253a;"></div>
<div class="b" style="left:696px;top:1140px;width:8px;height:8px;background:#20253a;"></div>
<div class="b" style="left:976px;top:1140px;width:8px;height:8px;background:#20253a;"></div>
<div class="b" style="left:1296px;top:1140px;width:8px;height:8px;background:#20253a;"></div>
<div class="b" style="left:1616px;top:1140px;width:8px;height:8px;background:#20253a;"></div>
<div class="b" style="left:1936px;top:1140px;width:8px;height:8px;background:#20253a;"></div>
<div class="b" style="left:2136px;top:1140px;width:8px;height:8px;background:#20253a;"></div>
<div class="b" style="left:2488px;top:1140px;width:8px;height:8px;background:#20253a;"></div>
<div class="b" style="left:2608px;top:1140px;width:8px;height:8px;background:#20253a;"></div>
<div class="b" style="left:2800px;top:1140px;width:8px;height:8px;background:#20253a;"></div>
<div class="b" style="left:144px;top:1148px;width:2822px;height:76px;background:#272b3d;"></div>
<div class="b" style="left:144px;top:1148px;width:552px;height:76px;background:#2a2f41;"></div>
<div class="b" style="left:704px;top:1148px;width:272px;height:76px;background:#2a2f41;"></div>
<div class="b" style="left:984px;top:1148px;width:312px;height:76px;background:#2a2f41;"></div>
<div class="b" style="left:1304px;top:1148px;width:312px;height:76px;background:#2a2f41;"></div>
<div class="b" style="left:1624px;top:1148px;width:312px;height:76px;background:#2a2f41;"></div>
<div class="b" style="left:1944px;top:1148px;width:192px;height:76px;background:#2a2f41;"></div>
<div class="b" style="left:2144px;top:1148px;width:344px;height:76px;background:#2a2f41;"></div>
<div class="b" style="left:2496px;top:1148px;width:112px;height:76px;background:#2a2f41;"></div>
<div class="b" style="left:2616px;top:1148px;width:184px;height:76px;background:#2a2f41;"></div>
<div class="b" style="left:2808px;top:1148px;width:152px;height:76px;background:#2a2f41;"></div>
<div class="b" style="left:2492px;top:1148px;width:4px;height:76px;background:#222739;"></div>
<div class="b" style="left:2612px;top:1148px;width:4px;height:76px;background:#222739;"></div>
<div class="b" style="left:2804px;top:1148px;width:4px;height:76px;background:#222739;"></div>
<div class="b" style="left:144px;top:1224px;width:2818px;height:4px;background:#20253a;"></div>
<div class="b" style="left:144px;top:1228px;width:2818px;height:4px;background:#272c3d;"></div>
<div class="b" style="left:696px;top:1224px;width:8px;height:8px;background:#20253a;"></div>
<div class="b" style="left:976px;top:1224px;width:8px;height:8px;background:#20253a;"></div>
<div class="b" style="left:1296px;top:1224px;width:8px;height:8px;background:#20253a;"></div>
<div class="b" style="left:1616px;top:1224px;width:8px;height:8px;background:#20253a;"></div>
<div class="b" style="left:1936px;top:1224px;width:8px;height:8px;background:#20253a;"></div>
<div class="b" style="left:2136px;top:1224px;width:8px;height:8px;background:#20253a;"></div>
<div class="b" style="left:2488px;top:1224px;width:8px;height:8px;background:#20253a;"></div>
<div class="b" style="left:2608px;top:1224px;width:8px;height:8px;background:#20253a;"></div>
<div class="b" style="left:2800px;top:1224px;width:8px;height:8px;background:#20253a;"></div>
<div class="b" style="left:2492px;top:1232px;width:4px;height:64px;background:#1f2436;"></div>
<div class="b" style="left:2612px;top:1232px;width:4px;height:64px;background:#1f2436;"></div>
<div class="b" style="left:2804px;top:1232px;width:4px;height:64px;background:#1f2436;"></div>
<div class="b" style="left:144px;top:1296px;width:2818px;height:4px;background:#272c3d;"></div>
<div class="b" style="left:144px;top:1300px;width:2818px;height:4px;background:#20253a;"></div>
<div class="b" style="left:696px;top:1296px;width:8px;height:8px;background:#20253a;"></div>
<div class="b" style="left:976px;top:1296px;width:8px;height:8px;background:#20253a;"></div>
<div class="b" style="left:1296px;top:1296px;width:8px;height:8px;background:#20253a;"></div>
<div class="b" style="left:1616px;top:1296px;width:8px;height:8px;background:#20253a;"></div>
<div class="b" style="left:1936px;top:1296px;width:8px;height:8px;background:#20253a;"></div>
<div class="b" style="left:2136px;top:1296px;width:8px;height:8px;background:#20253a;"></div>
<div class="b" style="left:2488px;top:1296px;width:8px;height:8px;background:#20253a;"></div>
<div class="b" style="left:2608px;top:1296px;width:8px;height:8px;background:#20253a;"></div>
<div class="b" style="left:2800px;top:1296px;width:8px;height:8px;background:#20253a;"></div>
<div class="b" style="left:144px;top:1304px;width:2822px;height:76px;background:#272b3d;"></div>
<div class="b" style="left:144px;top:1304px;width:552px;height:76px;background:#2a2f41;"></div>
<div class="b" style="left:704px;top:1304px;width:272px;height:76px;background:#2a2f41;"></div>
<div class="b" style="left:984px;top:1304px;width:312px;height:76px;background:#2a2f41;"></div>
<div class="b" style="left:1304px;top:1304px;width:312px;height:76px;background:#2a2f41;"></div>
<div class="b" style="left:1624px;top:1304px;width:312px;height:76px;background:#2a2f41;"></div>
<div class="b" style="left:1944px;top:1304px;width:192px;height:76px;background:#2a2f41;"></div>
<div class="b" style="left:2144px;top:1304px;width:344px;height:76px;background:#2a2f41;"></div>
<div class="b" style="left:2496px;top:1304px;width:112px;height:76px;background:#2a2f41;"></div>
<div class="b" style="left:2616px;top:1304px;width:184px;height:76px;background:#2a2f41;"></div>
<div class="b" style="left:2808px;top:1304px;width:152px;height:76px;background:#2a2f41;"></div>
<div class="b" style="left:2492px;top:1304px;width:4px;height:76px;background:#222739;"></div>
<div class="b" style="left:2612px;top:1304px;width:4px;height:76px;background:#222739;"></div>
<div class="b" style="left:2804px;top:1304px;width:4px;height:76px;background:#222739;"></div>
<div class="b" style="left:144px;top:1380px;width:2818px;height:4px;background:#20253a;"></div>
<div class="b" style="left:144px;top:1384px;width:2818px;height:4px;background:#272c3d;"></div>
<div class="b" style="left:696px;top:1380px;width:8px;height:8px;background:#20253a;"></div>
<div class="b" style="left:976px;top:1380px;width:8px;height:8px;background:#20253a;"></div>
<div class="b" style="left:1296px;top:1380px;width:8px;height:8px;background:#20253a;"></div>
<div class="b" style="left:1616px;top:1380px;width:8px;height:8px;background:#20253a;"></div>
<div class="b" style="left:1936px;top:1380px;width:8px;height:8px;background:#20253a;"></div>
<div class="b" style="left:2136px;top:1380px;width:8px;height:8px;background:#20253a;"></div>
<div class="b" style="left:2488px;top:1380px;width:8px;height:8px;background:#20253a;"></div>
<div class="b" style="left:2608px;top:1380px;width:8px;height:8px;background:#20253a;"></div>
<div class="b" style="left:2800px;top:1380px;width:8px;height:8px;background:#20253a;"></div>
<div class="b" style="left:2492px;top:1388px;width:4px;height:64px;background:#1f2436;"></div>
<div class="b" style="left:2612px;top:1388px;width:4px;height:64px;background:#1f2436;"></div>
<div class="b" style="left:2804px;top:1388px;width:4px;height:64px;background:#1f2436;"></div>
<div class="b" style="left:144px;top:1452px;width:2818px;height:4px;background:#272c3d;"></div>
<div class="b" style="left:144px;top:1456px;width:2818px;height:4px;background:#20253a;"></div>
<div class="b" style="left:696px;top:1452px;width:8px;height:8px;background:#20253a;"></div>
<div class="b" style="left:976px;top:1452px;width:8px;height:8px;background:#20253a;"></div>
<div class="b" style="left:1296px;top:1452px;width:8px;height:8px;background:#20253a;"></div>
<div class="b" style="left:1616px;top:1452px;width:8px;height:8px;background:#20253a;"></div>
<div class="b" style="left:1936px;top:1452px;width:8px;height:8px;background:#20253a;"></div>
<div class="b" style="left:2136px;top:1452px;width:8px;height:8px;background:#20253a;"></div>
<div class="b" style="left:2488px;top:1452px;width:8px;height:8px;background:#20253a;"></div>
<div class="b" style="left:2608px;top:1452px;width:8px;height:8px;background:#20253a;"></div>
<div class="b" style="left:2800px;top:1452px;width:8px;height:8px;background:#20253a;"></div>
<div class="b" style="left:144px;top:1460px;width:2822px;height:68px;background:#272b3d;"></div>
<div class="b" style="left:144px;top:1460px;width:552px;height:68px;background:#2a2f41;"></div>
<div class="b" style="left:704px;top:1460px;width:272px;height:68px;background:#2a2f41;"></div>
<div class="b" style="left:984px;top:1460px;width:312px;height:68px;background:#2a2f41;"></div>
<div class="b" style="left:1304px;top:1460px;width:312px;height:68px;background:#2a2f41;"></div>
<div class="b" style="left:1624px;top:1460px;width:312px;height:68px;background:#2a2f41;"></div>
<div class="b" style="left:1944px;top:1460px;width:192px;height:68px;background:#2a2f41;"></div>
<div class="b" style="left:2144px;top:1460px;width:344px;height:68px;background:#2a2f41;"></div>
<div class="b" style="left:2496px;top:1460px;width:112px;height:68px;background:#2a2f41;"></div>
<div class="b" style="left:2616px;top:1460px;width:184px;height:68px;background:#2a2f41;"></div>
<div class="b" style="left:2808px;top:1460px;width:152px;height:68px;background:#2a2f41;"></div>
<div class="b" style="left:2492px;top:1460px;width:4px;height:68px;background:#222739;"></div>
<div class="b" style="left:2612px;top:1460px;width:4px;height:68px;background:#222739;"></div>
<div class="b" style="left:2804px;top:1460px;width:4px;height:68px;background:#222739;"></div>
<div class="b" style="left:696px;top:672px;width:8px;height:8px;background:#20253a;"></div>
<div class="b" style="left:976px;top:672px;width:8px;height:8px;background:#20253a;"></div>
<div class="b" style="left:1296px;top:672px;width:8px;height:8px;background:#20253a;"></div>
<div class="b" style="left:1616px;top:672px;width:8px;height:8px;background:#20253a;"></div>
<div class="b" style="left:1936px;top:672px;width:8px;height:8px;background:#20253a;"></div>
<div class="b" style="left:2136px;top:672px;width:8px;height:8px;background:#20253a;"></div>
<div class="b" style="left:2488px;top:672px;width:8px;height:8px;background:#20253a;"></div>
<div class="b" style="left:2608px;top:672px;width:8px;height:8px;background:#20253a;"></div>
<div class="b" style="left:2800px;top:672px;width:8px;height:8px;background:#20253a;"></div>
<div class="t" style="left:152.00px;top:492.29px;font-size:26px;line-height:26px;color:#f5f8fa;letter-spacing:0.236px;">Segment ID</div>
<div class="t" style="left:713.00px;top:492.29px;font-size:26px;line-height:26px;color:#f5f8fa;letter-spacing:0.448px;">Datasource</div>
<div class="t" style="left:992.50px;top:492.29px;font-size:26px;line-height:26px;color:#f5f8fa;letter-spacing:0.597px;">Start</div>
<div class="t" style="left:1313.00px;top:492.29px;font-size:26px;line-height:26px;color:#f5f8fa;letter-spacing:-0.677px;">End</div>
<div class="t" style="left:1632.00px;top:492.29px;font-size:26px;line-height:26px;color:#f5f8fa;letter-spacing:0.698px;">Version</div>
<div class="t" style="left:1952.50px;top:492.29px;font-size:26px;line-height:26px;color:#f5f8fa;letter-spacing:0.518px;">Shard type</div>
<div class="t" style="left:2152.30px;top:492.29px;font-size:26px;line-height:26px;color:#f5f8fa;letter-spacing:0.207px;">Shard spec</div>
<div class="t" style="left:2507.50px;top:492.29px;font-size:26px;line-height:26px;color:#f5f8fa;letter-spacing:0.240px;">Partiti...</div>
<div class="t" style="left:2626.00px;top:492.29px;font-size:26px;line-height:26px;color:#f5f8fa;letter-spacing:-1.190px;">Size</div>
<div class="t" style="left:2819.50px;top:492.29px;font-size:26px;line-height:26px;color:#f5f8fa;letter-spacing:1.011px;">Num rows</div>
<div class="b" style="left:982px;top:572px;width:318px;height:6px;background:#8a93a9;"></div>
<div class="b" style="left:152px;top:598px;width:538px;height:60px;background:#383d57;border-radius:5px;box-shadow:inset 0 0 0 1px rgba(16,22,26,.25),inset 0 3px 3px rgba(16,22,26,.28);"></div>
<div class="b" style="left:712px;top:598px;width:258px;height:60px;background:#383d57;border-radius:5px;box-shadow:inset 0 0 0 1px rgba(16,22,26,.25),inset 0 3px 3px rgba(16,22,26,.28);"></div>
<div class="b" style="left:992px;top:598px;width:298px;height:60px;background:#383d57;border-radius:5px;box-shadow:inset 0 0 0 1px rgba(16,22,26,.25),inset 0 3px 3px rgba(16,22,26,.28);"></div>
<div class="b" style="left:1312px;top:598px;width:298px;height:60px;background:#383d57;border-radius:5px;box-shadow:inset 0 0 0 1px rgba(16,22,26,.25),inset 0 3px 3px rgba(16,22,26,.28);"></div>
<div class="b" style="left:1632px;top:598px;width:298px;height:60px;background:#383d57;border-radius:5px;box-shadow:inset 0 0 0 1px rgba(16,22,26,.25),inset 0 3px 3px rgba(16,22,26,.28);"></div>
<div class="b" style="left:1952px;top:598px;width:178px;height:60px;background:#383d57;border-radius:5px;box-shadow:inset 0 0 0 1px rgba(16,22,26,.25),inset 0 3px 3px rgba(16,22,26,.28);"></div>
<svg class="b" style="left:728.3px;top:614px;" width="28" height="28" viewBox="0 0 16 16"><path d="M3 5h10a1 1 0 010 2H3a1 1 0 010-2zm0 4h10a1 1 0 010 2H3a1 1 0 010-2z" fill="#a7b0cc" fill-rule="evenodd"/></svg>
<div class="t" style="left:772.50px;top:615.29px;font-size:26px;line-height:26px;color:#f5f8fa;letter-spacing:0.411px;">ticker_data</div>
<svg class="b" style="left:925.2px;top:613px;" width="30" height="30" viewBox="0 0 16 16"><path d="M9.410 8l3.290-3.290c.190-.180.300-.430.300-.710a1.003 1.003 0 00-1.710-.710L8 6.590l-3.290-3.300a1.003 1.003 0 00-1.420 1.420L6.590 8 3.300 11.290c-.190.180-.300.430-.300.710a1.003 1.003 0 001.710.710L8 9.410l3.290 3.290c.180.190.430.300.710.300a1.003 1.003 0 00.710-1.710L9.410 8z" fill="#727b98" fill-rule="evenodd"/></svg>
<div class="t" style="left:152.00px;top:705.49px;font-size:26px;line-height:26px;color:#f5f8fa;letter-spacing:0.102px;">ticker_data_2022-08-10T11:00:00.000Z_20...</div>
<div class="t" style="left:712.50px;top:705.49px;font-size:26px;line-height:26px;color:#f5f8fa;letter-spacing:0.431px;">ticker_data</div>
<div class="t" style="left:992.50px;top:705.49px;font-size:26px;line-height:26px;color:#f5f8fa;letter-spacing:0.130px;">2022-08-10T11:00:00.0...</div>
<div class="t" style="left:1312.50px;top:705.49px;font-size:26px;line-height:26px;color:#f5f8fa;letter-spacing:0.038px;">2022-08-10T12:00:00.0...</div>
<div class="t" style="left:1633.00px;top:705.49px;font-size:26px;line-height:26px;color:#f5f8fa;letter-spacing:-0.002px;">2022-08-10T12:46:35.1...</div>
<div class="t" style="left:1953.50px;top:705.49px;font-size:26px;line-height:26px;color:#f5f8fa;letter-spacing:0.239px;">hashed</div>
<div class="t" style="left:2144.00px;top:685.19px;font-size:26px;line-height:26px;color:#f5f8fa;letter-spacing:0.376px;">hash(&lt;all dimensions&gt;)</div>
<div class="t" style="left:2506.50px;top:705.49px;font-size:26px;line-height:26px;color:#f5f8fa;letter-spacing:0.000px;">0</div>
<div class="t" style="left:2636.00px;top:705.49px;font-size:26px;line-height:26px;color:#f5f8fa;letter-spacing:-0.701px;">1.42 KB</div>
<div class="t" style="left:2817.00px;top:705.49px;font-size:26px;line-height:26px;color:#f5f8fa;letter-spacing:0.000px;">1</div>
<div class="t" style="left:152.00px;top:783.49px;font-size:26px;line-height:26px;color:#f5f8fa;letter-spacing:0.054px;">ticker_data_2022-08-10T10:00:00.000Z_20...</div>
<div class="t" style="left:712.50px;top:783.49px;font-size:26px;line-height:26px;color:#f5f8fa;letter-spacing:0.431px;">ticker_data</div>
<div class="t" style="left:992.50px;top:783.49px;font-size:26px;line-height:26px;color:#f5f8fa;letter-spacing:0.046px;">2022-08-10T10:00:00.0...</div>
<div class="t" style="left:1312.50px;top:783.49px;font-size:26px;line-height:26px;color:#f5f8fa;letter-spacing:0.121px;">2022-08-10T11:00:00.0...</div>
<div class="t" style="left:1633.00px;top:783.49px;font-size:26px;line-height:26px;color:#f5f8fa;letter-spacing:-0.002px;">2022-08-10T12:46:35.1...</div>
<div class="t" style="left:1953.50px;top:783.49px;font-size:26px;line-height:26px;color:#f5f8fa;letter-spacing:0.239px;">hashed</div>
<div class="t" style="left:2144.00px;top:763.19px;font-size:26px;line-height:26px;color:#f5f8fa;letter-spacing:0.376px;">hash(&lt;all dimensions&gt;)</div>
<div class="t" style="left:2506.50px;top:783.49px;font-size:26px;line-height:26px;color:#f5f8fa;letter-spacing:0.000px;">0</div>
<div class="t" style="left:2636.00px;top:783.49px;font-size:26px;line-height:26px;color:#f5f8fa;letter-spacing:-0.701px;">1.42 KB</div>
<div class="t" style="left:2817.00px;top:783.49px;font-size:26px;line-height:26px;color:#f5f8fa;letter-spacing:0.000px;">1</div>
<div class="b" style="left:144px;top:1528px;width:2816px;height:26px;background:#303030;"></div>
<div class="b" style="left:144px;top:1534px;width:1762px;height:16px;background:#7b7b7b;border-radius:8px;"></div>
<div class="b" style="left:144px;top:1554px;width:2816px;height:12px;background:linear-gradient(#262c3c,#212848 60%,#24283b);"></div>
<svg class="b" style="left:157px;top:1581px;" width="30" height="30" viewBox="0 0 16 16"><path d="M7.410 8l3.290-3.290c.190-.180.300-.430.300-.710a1.003 1.003 0 00-1.710-.710l-4 4C5.110 7.470 5 7.720 5 8c0 .280.110.530.290.710l4 4a1.003 1.003 0 001.420-1.420L7.410 8z" fill="#a7b0cc" fill-rule="evenodd"/></svg>
<svg class="b" style="left:218.4px;top:1581px;" width="30" height="30" viewBox="0 0 16 16"><path d="M10.710 7.290l-4-4a1.003 1.003 0 00-1.420 1.420L8.590 8 5.300 11.290c-.190.180-.300.430-.300.710a1.003 1.003 0 001.710.710l4-4c.180-.180.290-.430.290-.710 0-.280-.110-.530-.290-.710z" fill="#a7b0cc" fill-rule="evenodd"/></svg>
<div class="t" style="left:292.00px;top:1583.49px;font-size:26px;line-height:26px;color:#f5f8fa;letter-spacing:0.227px;">Showing 1-2</div>
</div></div>

</body></html>
